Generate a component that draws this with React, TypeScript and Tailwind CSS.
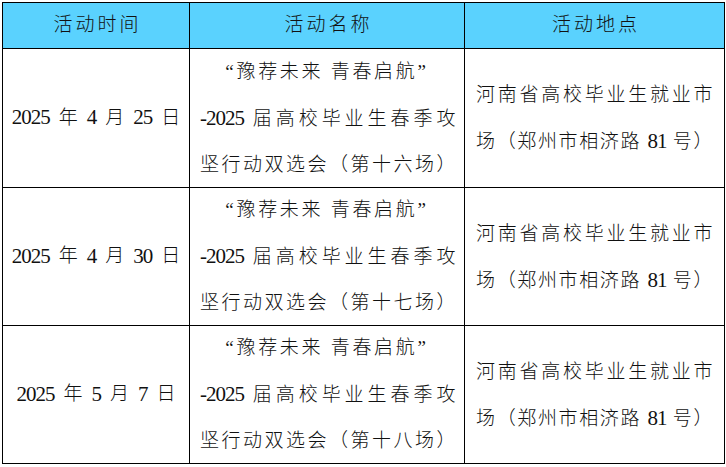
import React from "react";

function Txt({ s }: { s: string }) {
  const parts = s.split(/([0-9\-]+)/);
  return (
    <>
      {parts.map((p, i) =>
        /^[0-9\-]+$/.test(p) ? (
          <span key={i} className="text-[21px] tracking-[-1px] font-normal">
            {p}
          </span>
        ) : (
          <React.Fragment key={i}>{p}</React.Fragment>
        )
      )}
    </>
  );
}

const rows = [
  { date: ["2025", "年", "4", "月", "25", "日"], n: "十六", h: "h-[139px]" },
  { date: ["2025", "年", "4", "月", "30", "日"], n: "十七", h: "h-[138px]" },
  { date: ["2025", "年", "5", "月", "7", "日"], n: "十八", h: "h-[138px]" },
];

export default function App() {
  return (
    <div className="w-[726px] h-[467px] bg-white pt-[2px] pl-[2px] text-[#111] text-[19px] font-light font-['Liberation_Serif','Noto_Sans_CJK_SC',serif]">
      <div className="grid grid-cols-[187px_275px_260px] w-[723px] border-l border-t border-black">
        {["活动时间", "活动名称", "活动地点"].map((t) => (
          <div
            key={t}
            className="h-[46px] bg-[#5ad2fe] border-r border-b border-black flex items-center justify-center tracking-[3px] pl-[3px]"
          >
            {t}
          </div>
        ))}
        {rows.map((r, idx) => (
          <React.Fragment key={idx}>
            <div
              className={`${r.h} border-r border-b border-black flex items-center justify-center gap-[9px]`}
            >
              {r.date.map((d, i) =>
                /^[0-9]+$/.test(d) ? (
                  <span key={i} className="text-[21px] tracking-[-1px] font-normal">
                    {d}
                  </span>
                ) : (
                  <span key={i}>{d}</span>
                )
              )}
            </div>
            <div
              className={`${r.h} border-r border-b border-black flex flex-col justify-center`}
            >
              <div className="text-center leading-[46px] tracking-[2.7px] whitespace-nowrap">
                “豫荐未来 青春启航”
              </div>
              <div className="ml-[10px] w-[257px] leading-[46px] tracking-[1.5px] whitespace-nowrap text-justify [text-align-last:justify]">
                <Txt s="-2025 届高校毕业生春季攻" />
              </div>
              <div className="ml-[10px] w-[257px] leading-[46px] tracking-[1.5px] whitespace-nowrap text-justify [text-align-last:justify]">
                {`坚行动双选会（第${r.n}场）`}
              </div>
            </div>
            <div
              className={`${r.h} border-r border-b border-black flex flex-col justify-center`}
            >
              <div className="ml-[11px] w-[238px] leading-[47px] tracking-[1.5px] whitespace-nowrap text-justify [text-align-last:justify]">
                河南省高校毕业生就业市
              </div>
              <div className="ml-[11px] w-[238px] leading-[47px] tracking-[1.5px] whitespace-nowrap text-justify [text-align-last:justify]">
                <Txt s="场（郑州市相济路 81 号）" />
              </div>
            </div>
          </React.Fragment>
        ))}
      </div>
    </div>
  );
}
